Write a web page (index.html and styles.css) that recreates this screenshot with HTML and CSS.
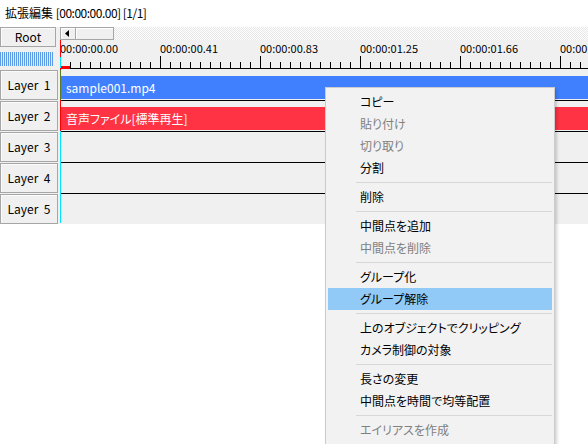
FILE: index.html
```html
<!DOCTYPE html>
<html lang="ja">
<head>
<meta charset="utf-8">
<title>拡張編集</title>
<link rel="stylesheet" href="styles.css">
</head>
<body>
<div class="title">拡張編集 <span class="tnum">[00:00:00.00] [1/1]</span></div>
<div class="editor">
  <div class="head">
    <div class="side">
      <div class="btn root">Root</div>
      <div class="meter"></div>
    </div>
    <div class="timebar">
      <div class="scrollrow">
        <div class="scrollbar">
          <div class="sbtn arrow"><svg width="4" height="7" viewBox="0 0 4 7"><path d="M4 0V7L0 3.5Z" fill="#000"/></svg></div>
          <div class="sbtn thumb"></div>
        </div>
        <div class="hatch"></div>
      </div>
      <div class="ruler">
        <div class="labels">
          <span>00:00:00.00</span><span>00:00:00.41</span><span>00:00:00.83</span><span>00:00:01.25</span><span>00:00:01.66</span><span>00:00:02.08</span>
        </div>
        <div class="ticks"></div>
        <div class="mark"></div>
      </div>
    </div>
  </div>
  <div class="layers">
    <div class="layer"><div class="btn lbtn">Layer  1</div><div class="track"><div class="clip video">sample001.mp4</div></div></div>
    <div class="layer"><div class="btn lbtn">Layer  2</div><div class="track"><div class="clip audio">音声ファイル[標準再生]</div></div></div>
    <div class="layer"><div class="btn lbtn">Layer  3</div><div class="track"></div></div>
    <div class="layer"><div class="btn lbtn">Layer  4</div><div class="track"></div></div>
    <div class="layer last"><div class="btn lbtn">Layer  5</div><div class="track"></div></div>
  </div>
  <div class="cursor"></div>
</div>
<div class="menu">
  <div class="item">コピー</div>
  <div class="item off">貼り付け</div>
  <div class="item off">切り取り</div>
  <div class="item">分割</div>
  <div class="sep"></div>
  <div class="item">削除</div>
  <div class="sep"></div>
  <div class="item">中間点を追加</div>
  <div class="item off">中間点を削除</div>
  <div class="sep"></div>
  <div class="item">グループ化</div>
  <div class="item hot">グループ解除</div>
  <div class="sep"></div>
  <div class="item">上のオブジェクトでクリッピング</div>
  <div class="item">カメラ制御の対象</div>
  <div class="sep"></div>
  <div class="item">長さの変更</div>
  <div class="item">中間点を時間で均等配置</div>
  <div class="sep"></div>
  <div class="item off">エイリアスを作成</div>
</div>
</body>
</html>
```
FILE: styles.css
```css
html, body {
  margin: 0;
  padding: 0;
  background: #ffffff;
  font-family: "Noto Sans CJK JP", "Noto Sans", sans-serif;
  font-size: 12px;
  color: #000;
  overflow: hidden;
}

.title {
  height: 27px;
  line-height: 25px;
  padding-left: 5px;
  font-feature-settings: "palt";
  white-space: nowrap;
}

.tnum {
  letter-spacing: -0.5px;
}

.editor {
  position: relative;
  background: #f0f0f0;
  width: 588px;
}

.head {
  display: flex;
}

.side {
  width: 60px;
  flex: none;
}

.btn {
  box-sizing: border-box;
  background: #f0f0f0;
  border: 1px solid #a6a6a6;
  box-shadow: inset 1px 1px 0 #fbfbfb;
  text-align: center;
  white-space: pre;
}

.root {
  width: 56px;
  height: 20px;
  line-height: 18px;
}

.meter {
  margin-top: 5px;
  width: 53px;
  height: 14px;
  background: repeating-linear-gradient(90deg, #5d9be6 0 1px, #e2ebf7 1px 2px);
}

.timebar {
  flex: 1;
  min-width: 0;
}

.scrollrow {
  display: flex;
  height: 13px;
}

.scrollbar {
  display: flex;
  width: 54px;
  flex: none;
}

.sbtn {
  box-sizing: border-box;
  height: 13px;
  background: #f0f0f0;
  border: 1px solid #a6a6a6;
  box-shadow: inset 1px 1px 0 #fff;
}

.arrow {
  width: 16px;
  display: flex;
  align-items: center;
  padding-left: 4px;
}

.arrow svg {
  display: block;
}

.thumb {
  flex: 1;
  border-left: none;
}

.hatch {
  flex: 1;
  background: repeating-conic-gradient(#e7e7e7 0 25%, #ffffff 0 50%) 0 0 / 2px 2px;
}

.ruler {
  position: relative;
  height: 30px;
  overflow: hidden;
}

.labels {
  display: flex;
  padding-top: 2px;
  height: 14px;
  line-height: 12px;
  font-size: 11px;
  white-space: nowrap;
}

.labels span {
  flex: none;
  width: 100px;
}

.ticks {
  position: absolute;
  left: 0;
  right: 0;
  bottom: 1px;
  height: 13px;
  background:
    linear-gradient(#000, #000) left bottom / 100% 1px no-repeat,
    repeating-linear-gradient(90deg, #000 0 1px, transparent 1px 100px) left bottom / 100% 13px no-repeat,
    repeating-linear-gradient(90deg, #000 0 1px, transparent 1px 10px) left bottom / 100% 7px no-repeat;
}

.mark {
  position: absolute;
  left: 0;
  bottom: 1px;
  width: 10px;
  height: 3px;
  background: #ff0000;
}

.layers {
  display: flex;
  flex-direction: column;
}

.layer {
  display: flex;
  height: 31px;
}

.lbtn {
  width: 58px;
  height: 30px;
  line-height: 28px;
  flex: none;
  margin-right: 2px;
}

.track {
  flex: 1;
  min-width: 0;
  border-bottom: 1px solid #000;
  padding-top: 6px;
  overflow: hidden;
}

.last {
  height: 30px;
}

.last .track {
  border-bottom: none;
}

.clip {
  height: 23px;
  line-height: 23px;
  padding-left: 6px;
  color: #fff;
  white-space: nowrap;
  font-feature-settings: "palt";
}

.video {
  background: #4080ff;
}

.audio {
  background: #ff3344;
}

.cursor {
  position: absolute;
  left: 60px;
  top: 13px;
  width: 1px;
  height: 183px;
  background: linear-gradient(#ff0000 0 17px, #00e5ff 17px 28px, #ff0000 28px 30px, #5a7a20 30px 60px, #ff0000 60px 91px, #00e5ff 91px);
}

.menu {
  position: absolute;
  left: 325px;
  top: 87px;
  width: 224px;
  padding: 3px 2px;
  background: #f2f2f2;
  border: 1px solid #cccccc;
  box-shadow: 2px 2px 3px rgba(0, 0, 0, 0.18);
  font-feature-settings: "palt";
}

.item {
  height: 22px;
  line-height: 22px;
  padding-left: 32px;
  white-space: nowrap;
}

.off {
  color: #808080;
}

.hot {
  background: #91c9f7;
}

.sep {
  height: 1px;
  margin: 3px 0 3px 28px;
  background: #d7d7d7;
}
```
